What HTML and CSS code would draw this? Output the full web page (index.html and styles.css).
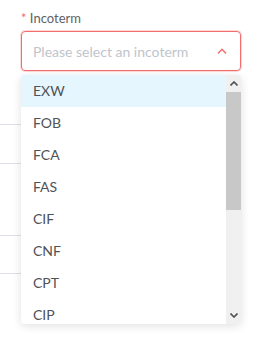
FILE: index.html
```html
<!DOCTYPE html>
<html lang="en">

<head>
    <meta charset="UTF-8">
    <title>Incoterm</title>
    <link rel="stylesheet" href="styles.css">
</head>

<body>
    <div id="wrap">
        <div class="field">
            <label class="label"><span class="req">*</span> Incoterm</label>
            <div class="select">
                <span class="placeholder">Please select an incoterm</span>
                <svg class="arrow" width="10" height="6" viewBox="0 0 10 6">
                    <path d="M1 5.5 L5 1.2 L9 5.5" fill="none" stroke="#f56c6c" stroke-width="1.4"/>
                </svg>
            </div>
        </div>
        <div class="rows">
            <div class="row r1"></div>
            <div class="row r2"></div>
            <div class="row r3"></div>
            <div class="row r4"></div>
        </div>
        <div class="dropdown">
            <ul class="options">
                <li class="hover">EXW</li>
                <li>FOB</li>
                <li>FCA</li>
                <li>FAS</li>
                <li>CIF</li>
                <li>CNF</li>
                <li>CPT</li>
                <li>CIP</li>
            </ul>
            <div class="scrollbar">
                <div class="btn">
                    <svg width="8" height="5" viewBox="0 0 8 5"><path d="M0.5 4.5 L4 1 L7.5 4.5" fill="none" stroke="#505050" stroke-width="1.6"/></svg>
                </div>
                <div class="thumb"></div>
                <div class="track"></div>
                <div class="btn">
                    <svg width="8" height="5" viewBox="0 0 8 5"><path d="M0.5 0.5 L4 4 L7.5 0.5" fill="none" stroke="#505050" stroke-width="1.6"/></svg>
                </div>
            </div>
        </div>
    </div>
</body>

</html>
```

FILE: styles.css
```css
body {
    margin: 0;
    font-family: Lato, "Liberation Sans", Arial, sans-serif;
    background: #fff;
}

ul {
    padding: 0;
    margin: 0;
    list-style: none;
}

#wrap {
    position: relative;
    width: 261px;
    height: 339px;
    overflow: hidden;
}

.field {
    padding: 10px 20px 0 21px;
}

.label {
    display: block;
    height: 16px;
    line-height: 16px;
    margin-bottom: 5px;
    font-size: 13px;
    color: #606266;
}

.req {
    color: #f56c6c;
}

.select {
    display: flex;
    align-items: center;
    justify-content: space-between;
    height: 40px;
    box-sizing: border-box;
    padding: 0 13px 0 11px;
    border: 1px solid #f56c6c;
    border-radius: 4px;
    box-shadow: 0 0 0 1px rgba(245, 108, 108, .25);
}

.placeholder {
    font-size: 14px;
    color: #c0c4cc;
}

.arrow {
    display: block;
}

.rows {
    width: 40px;
}

.row {
    border-top: 1px solid #dcdfe6;
}

.r1 {
    margin-top: 53px;
}

.r2 {
    margin-top: 38px;
}

.r3 {
    margin-top: 71px;
}

.r4 {
    margin-top: 37px;
}

.dropdown {
    position: absolute;
    top: 75px;
    left: 21px;
    display: flex;
    width: 220px;
    height: 249px;
    background: #fff;
    border-radius: 4px;
    overflow: hidden;
    box-shadow: 0 2px 10px rgba(0, 0, 0, .12);
}

.options {
    flex: 1;
}

.options li {
    height: 32px;
    line-height: 32px;
    padding-left: 12px;
    font-size: 14px;
    color: #4f5256;
}

.options .hover {
    background: #e6f6ff;
}

.scrollbar {
    display: flex;
    flex-direction: column;
    width: 15px;
    background: #f0f0f0;
}

.btn {
    display: flex;
    align-items: center;
    justify-content: center;
    height: 17px;
}

.thumb {
    height: 118px;
    background: #c8c8c8;
}

.track {
    flex: 1;
}
```
